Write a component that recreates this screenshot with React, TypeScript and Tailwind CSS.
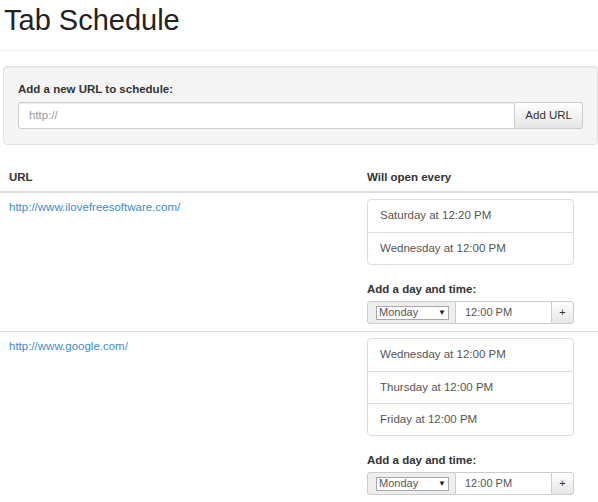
import React from "react";

type Row = { url: string; times: string[] };

const rows: Row[] = [
  {
    url: "http://www.ilovefreesoftware.com/",
    times: ["Saturday at 12:20 PM", "Wednesday at 12:00 PM"],
  },
  {
    url: "http://www.google.com/",
    times: ["Wednesday at 12:00 PM", "Thursday at 12:00 PM", "Friday at 12:00 PM"],
  },
];

function AddTime() {
  return (
    <div className="mt-[17px]">
      <div className="text-[11.5px] font-bold text-[#333] leading-[15px] mb-[4px]">Add a day and time:</div>
      <div className="flex h-[23px] w-[207px] text-[11px]">
        <div className="flex items-center w-[89px] bg-[#eee] border border-[#ccc] rounded-l-[3px] pl-[8px]">
          <div className="flex items-center justify-between w-[73px] h-[14px] bg-white border border-[#a9a9a9] px-[2px] text-[#555]">
            <span>Monday</span>
            <span className="text-[8px] text-[#222]">▼</span>
          </div>
        </div>
        <div className="flex items-center w-[95px] border-y border-[#ccc] bg-white pl-[9px] text-[#555]">12:00 PM</div>
        <div className="flex items-center justify-center w-[23px] border border-[#ccc] rounded-r-[3px] bg-gradient-to-b from-white to-[#e6e6e6] text-[#333]">
          +
        </div>
      </div>
    </div>
  );
}

export default function App() {
  return (
    <div className="w-[598px] h-[502px] overflow-hidden bg-white text-[#333] font-['Liberation_Sans',Arial,sans-serif]">
      <div className="pl-[4px] pt-[3px] pb-[13px] border-b border-[#eee]">
        <h1 className="text-[29px] leading-[34px] font-normal text-[#222]">Tab Schedule</h1>
      </div>
      <div className="mt-[15px] ml-[3px] bg-[#f5f5f5] border border-[#e3e3e3] rounded-[4px] px-[14px] pt-[15px] pb-[15px] shadow-[inset_0_1px_1px_rgba(0,0,0,0.05)]">
        <div className="text-[11.5px] font-bold leading-[15px] mb-[5px] text-[#333]">Add a new URL to schedule:</div>
        <div className="flex h-[27px]">
          <div className="flex-1 flex items-center bg-white border border-[#ccc] rounded-l-[3px] pl-[10px] text-[11.5px] text-[#999] shadow-[inset_0_1px_1px_rgba(0,0,0,0.075)]">
            http://
          </div>
          <div className="flex items-center px-[10px] border border-l-0 border-[#ccc] rounded-r-[3px] bg-gradient-to-b from-white to-[#e6e6e6] text-[11.5px] text-[#333]">
            Add URL
          </div>
        </div>
      </div>
      <div className="mt-[25px]">
        <div className="flex border-b-2 border-[#ddd] text-[11.5px] font-bold leading-[15px] pb-[6px]">
          <div className="w-[367px] pl-[9px]">URL</div>
          <div>Will open every</div>
        </div>
        {rows.map((row, i) => (
          <div key={row.url} className={`flex ${i > 0 ? "border-t border-[#ddd]" : ""} pt-[6px] pb-[7px]`}>
            <div className="w-[367px] pl-[9px] pt-[1px] text-[11.5px] leading-[15px] text-[#428bca]">{row.url}</div>
            <div>
              <div className="w-[207px] border border-[#ddd] rounded-[4px] bg-white">
                {row.times.map((t, j) => (
                  <div
                    key={t}
                    className={`h-[32px] flex items-center pl-[12px] text-[11.5px] text-[#555] ${j > 0 ? "border-t border-[#ddd]" : ""}`}
                  >
                    {t}
                  </div>
                ))}
              </div>
              <AddTime />
            </div>
          </div>
        ))}
      </div>
    </div>
  );
}
